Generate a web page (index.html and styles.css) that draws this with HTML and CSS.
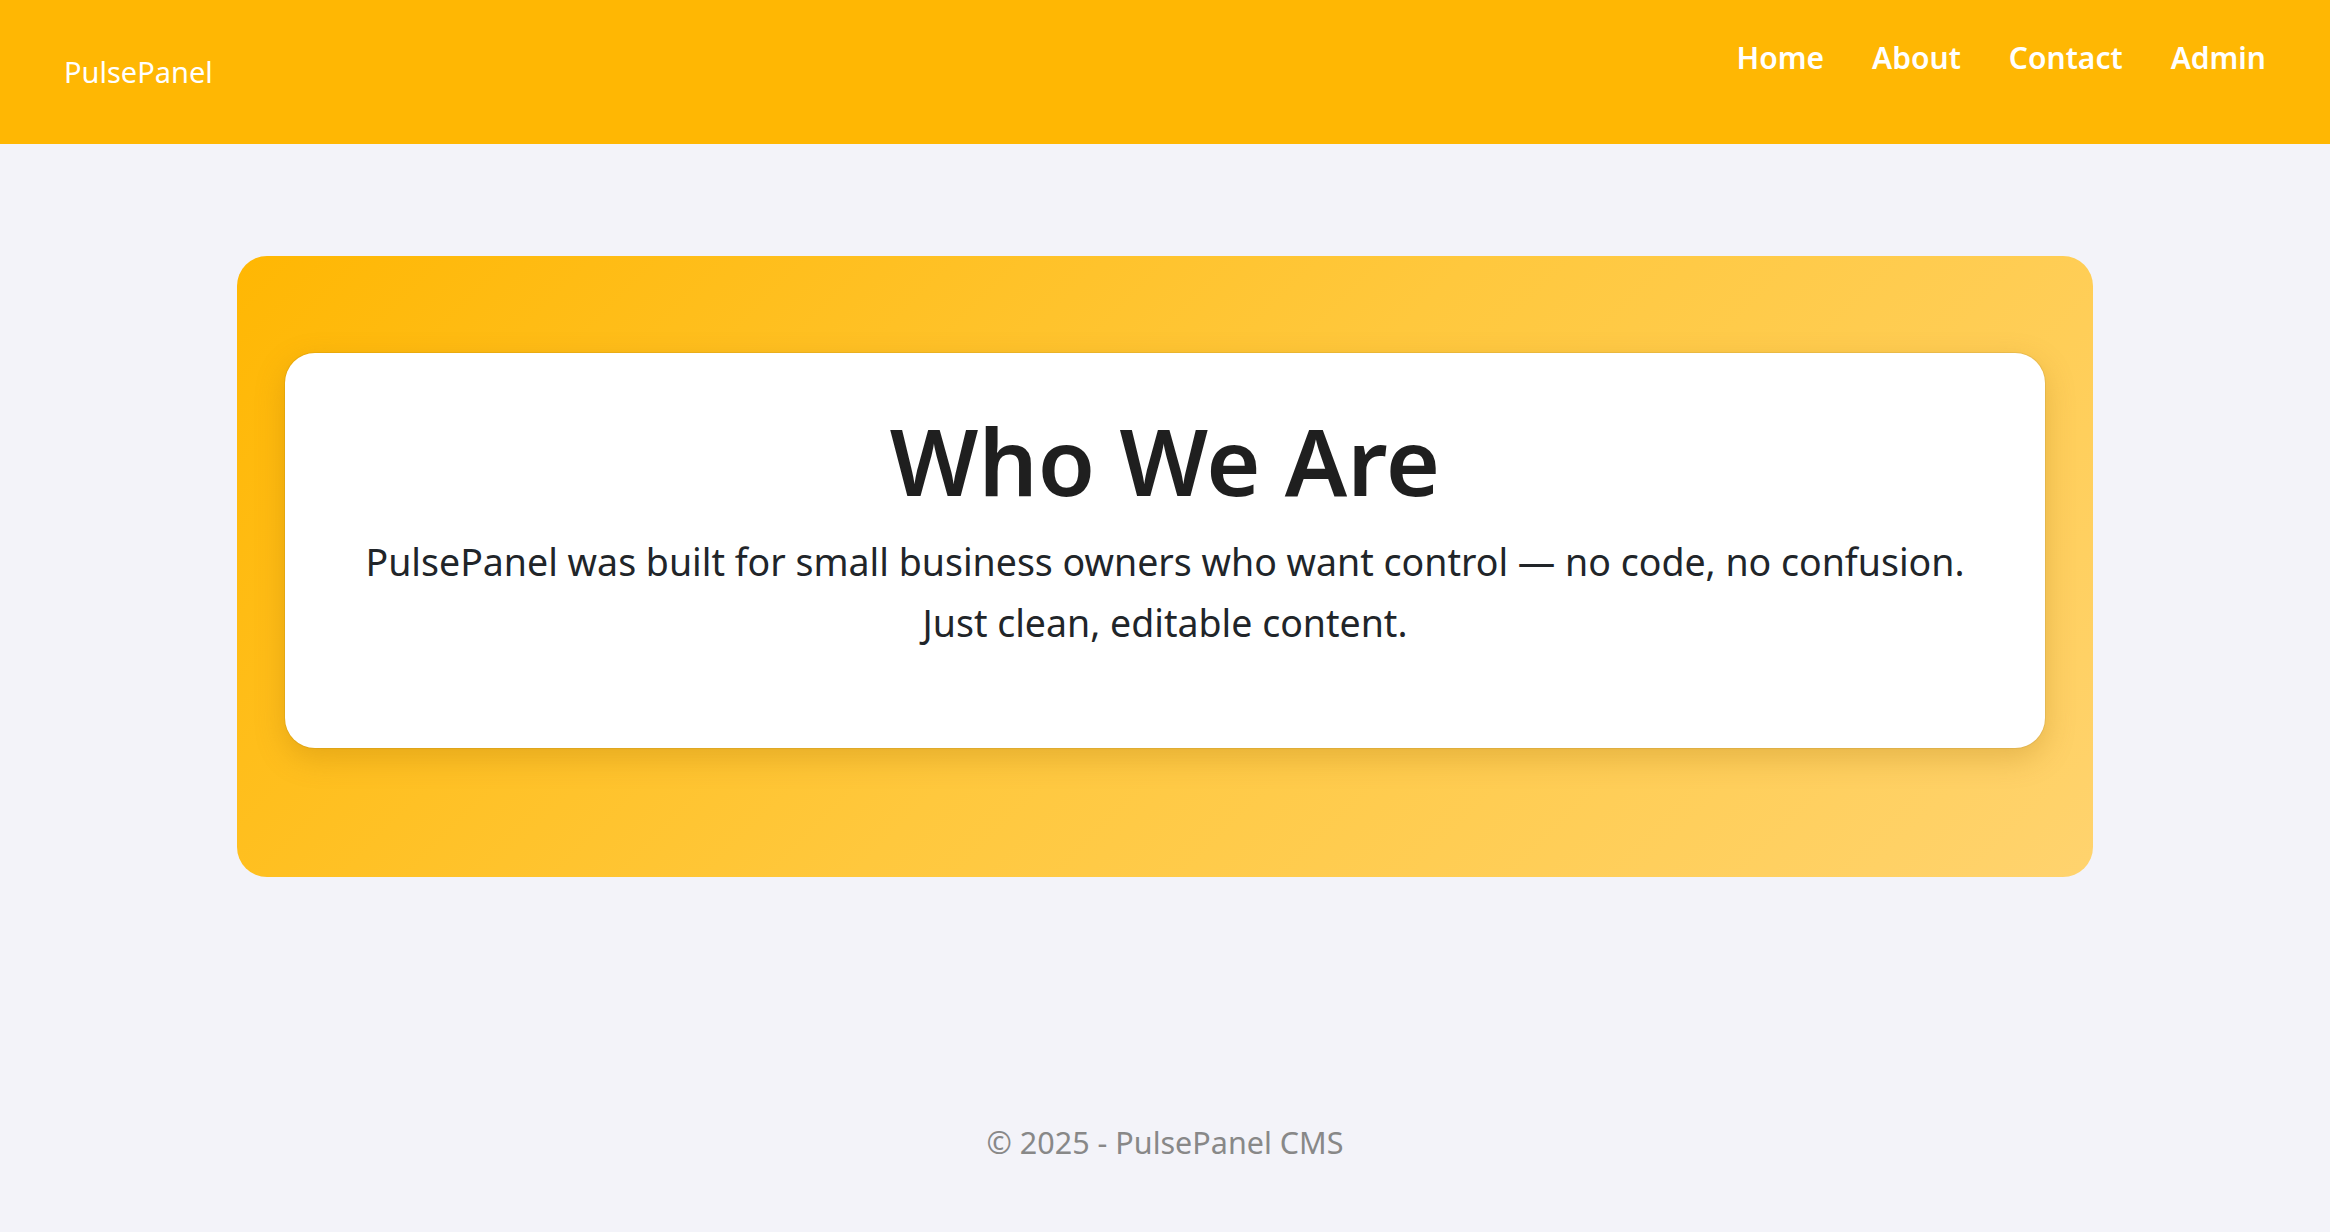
FILE: index.html
```html
<!DOCTYPE html>
<html lang="en">
<head>
<meta charset="utf-8">
<title>PulsePanel</title>
<link rel="stylesheet" href="styles.css">
</head>
<body>
<header class="topbar">
  <a class="brand" href="#">PulsePanel</a>
  <nav class="nav">
    <a class="nav-link" href="#">Home</a>
    <a class="nav-link" href="#">About</a>
    <a class="nav-link" href="#">Contact</a>
    <a class="nav-link" href="#">Admin</a>
  </nav>
</header>
<main class="main">
  <section class="hero">
    <div class="hero-card">
      <h1 class="hero-title">Who We Are</h1>
      <p class="hero-text">PulsePanel was built for small business owners who want control — no code, no confusion. Just clean, editable content.</p>
    </div>
  </section>
</main>
<footer class="footer">© 2025 - PulsePanel CMS</footer>
</body>
</html>
```
FILE: styles.css
```css
html, body {
  margin: 0;
  padding: 0;
}
body {
  background: #f3f3f9;
  font-family: "Noto Sans", "Open Sans", sans-serif;
  color: #212529;
  min-height: 100vh;
  display: flex;
  flex-direction: column;
}
a { text-decoration: none; }

.topbar {
  height: 144px;
  background: #ffb703;
  display: flex;
  justify-content: space-between;
  align-items: flex-start;
  padding: 0 64px 0 64px;
  box-sizing: border-box;
}
.brand {
  color: #fff;
  font-size: 29px;
  line-height: 40px;
  align-self: center;
}
.nav {
  display: flex;
  gap: 48px;
  padding-top: 37px;
}
.nav-link {
  color: #fff;
  font-size: 30px;
  font-weight: 600;
  line-height: 42px;
}

.main {
  display: flex;
  justify-content: center;
  padding-top: 112px;
}
.hero {
  width: 1856px;
  box-sizing: border-box;
  padding: 97px 48px 129px;
  border-radius: 30px;
  background: linear-gradient(135deg, #ffb703 0%, #ffc83d 50%, #ffd36e 100%);
}
.hero-card {
  background: #fff;
  border-radius: 30px;
  padding: 50px 60px 95px;
  text-align: center;
  box-shadow: 0 10px 30px rgba(150, 100, 0, 0.25), 0 0 0 1px rgba(0, 0, 0, 0.06);
}
.hero-title {
  margin: 0 0 13px;
  font-size: 93px;
  line-height: 115px;
  font-weight: 600;
  color: #1f1f1f;
}
.hero-text {
  margin: 0;
  font-size: 37.5px;
  line-height: 61px;
  color: #212529;
}

.footer {
  margin-top: auto;
  text-align: center;
  color: #888;
  font-size: 30.5px;
  line-height: 40px;
  padding: 0 0 70px;
}
```
